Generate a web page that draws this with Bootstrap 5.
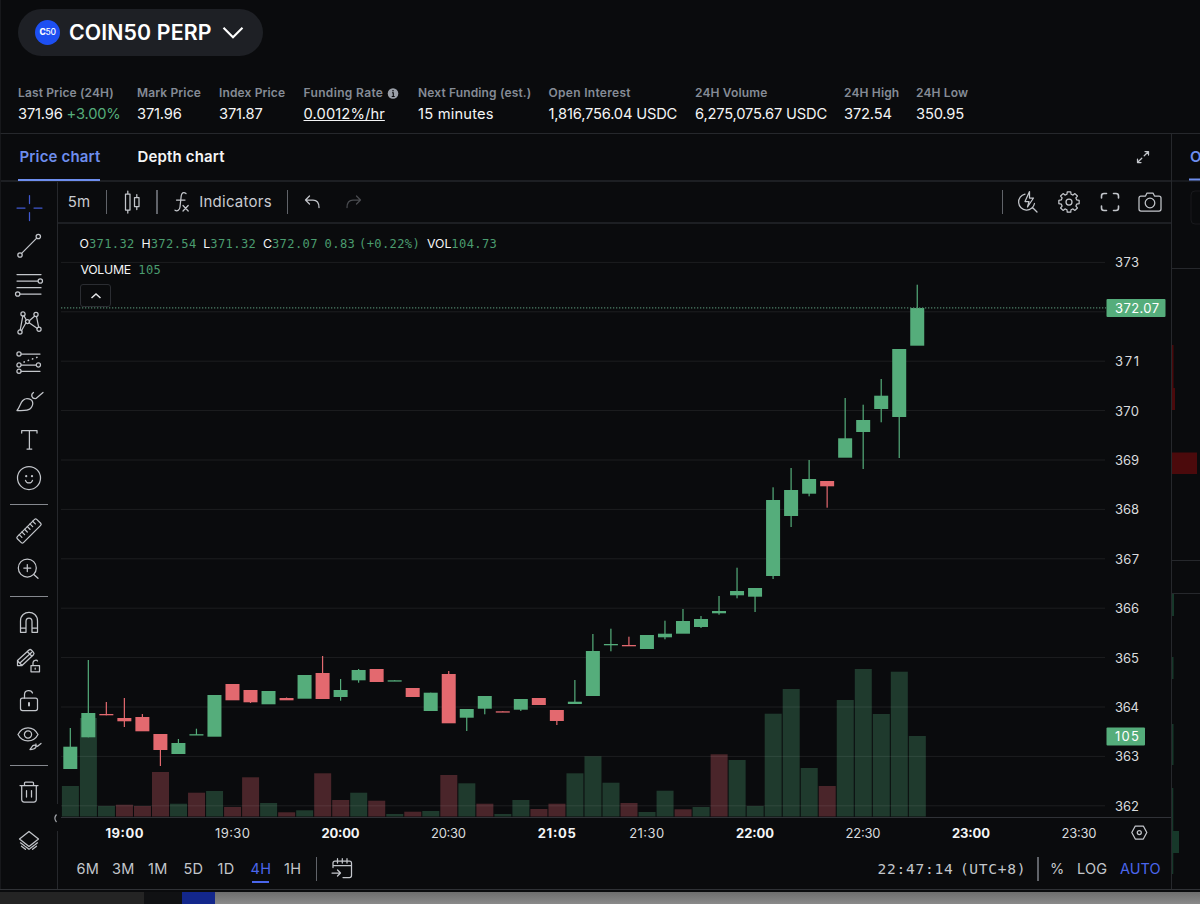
<!DOCTYPE html>
<html lang="en">
<head>
<meta charset="utf-8">
<meta name="viewport" content="width=device-width, initial-scale=1">
<title>COIN50 PERP</title>
<link href="https://cdn.jsdelivr.net/npm/bootstrap@5.3.0/dist/css/bootstrap.min.css" rel="stylesheet">
<style>
:root{--bg:#0a0b0d;--line:#26282c;--up:#55ad7b;--down:#e3696f;--accent:#6e8eee;--ico:#c3c6cb}
body{background:var(--bg);color:#f4f5f6;font-family:Inter,"Liberation Sans",sans-serif;width:1200px;height:904px;overflow:hidden;line-height:1.2}
svg{display:block;flex:none}
.ico{fill:none;stroke:var(--ico);stroke-width:1.25;stroke-linecap:round;stroke-linejoin:round}
.head{height:134px;border-bottom:1px solid var(--line);border-left:1px solid #17181b;padding:9px 0 0 17px}
.market{width:245px;height:47px;background:#1e2025;padding-left:17px;color:#fff}
.coin{width:25px;height:25px;background:#1d4ff2;font-size:8.5px;letter-spacing:-.3px;font-weight:500}
.coin b{font-weight:800}
.market-name{font-size:21.3px;font-weight:600;margin-left:9px;width:143px;letter-spacing:.12px;white-space:nowrap}
.stats{display:grid;grid-template-columns:119px 82px 84.5px 114.5px 130.5px 146.5px 149px 72px 60px;margin-top:30px;white-space:nowrap}
.stat-k{font-size:12px;font-weight:600;color:#858b96;height:15px;letter-spacing:.14px}
.stat-v{font-size:14.7px;height:18px;margin-top:5px;letter-spacing:-.18px}
.up{color:var(--up)}
.main{height:755px}
.panel{width:1172px;border-right:1px solid var(--line);border-left:1px solid #17181b}
.tabs{height:48px;border-bottom:2px solid #1d1f23;padding-left:17px;font-size:15px;font-weight:600;letter-spacing:.16px;white-space:nowrap}
.tab{height:47px;padding:14px 0 0 1.5px}
.tab.on{color:var(--accent);border-bottom:2px solid var(--accent);width:82px}
.tab.off{margin-left:36px}
.rail{width:57px;border-right:1px solid var(--line);padding-top:6.75px;position:relative}
.rail svg{height:38.5px;width:40px;margin-left:8px}
.rail hr{width:38px;margin:7px 0 7px 9px;border:0;height:1px;background:#85888e;opacity:1}
.fold{position:absolute;left:48px;top:622px;width:12px;height:27px;background:var(--bg)}
.work{width:1113px}
.bar{height:42px;border-bottom:2px solid #1d1f23;color:#c9ccd1;font-size:15px}
.sep{width:1.5px;height:24px;background:#606369}
.plot{height:629px;position:relative}
.plot text{fill:#d9dbde;font-size:13px;font-family:Inter,sans-serif}
.plot text.hour{font-weight:700;fill:#f4f5f6}
.legend{position:absolute;left:21.5px;top:12.5px;font-size:12.3px;white-space:nowrap}
.mono{font-family:"DejaVu Sans Mono","Liberation Mono",monospace;color:#4a9c6f}
.legend .mono{font-size:12.1px;letter-spacing:.36px}
.collapse-btn{width:31px;height:23px;border:1.5px solid #2b2d32;border-radius:3px;background:var(--bg)}
.foot{height:32px;font-size:14.5px;color:#c3c6cb;letter-spacing:.4px}
.range{width:33px;height:18px;white-space:nowrap}
.cur{color:#4a66ec}
.cur:after{content:"";display:block;height:2px;width:17px;background:#4a66ec;margin:4px 0 0 2px}
.clock{font-family:"DejaVu Sans Mono",monospace;font-size:14.6px;letter-spacing:.7px;word-spacing:-3px;width:159.5px;white-space:nowrap}
.side{width:28px;overflow:hidden}
.under{height:15px;border-top:1px solid #303236;padding-top:2px}
.under div{height:12px}
</style>
</head>
<body>
<header class="head">
  <div class="market rounded-pill d-flex align-items-center">
    <span class="coin rounded-circle d-flex align-items-center justify-content-center"><b>C</b>50</span>
    <span class="market-name">COIN50 PERP</span>
    <svg class="ms-2" width="26" height="24" viewBox="0 0 26 24" fill="none" stroke="#fff" stroke-width="2.1"><path d="M3.5 6.8 13 16.3 22.5 6.8"/></svg>
  </div>
  <div class="stats">
    <div><div class="stat-k">Last Price (24H)</div><div class="stat-v">371.96 <span class="up">+3.00%</span></div></div>
    <div><div class="stat-k">Mark Price</div><div class="stat-v">371.96</div></div>
    <div><div class="stat-k">Index Price</div><div class="stat-v">371.87</div></div>
    <div><div class="stat-k d-flex align-items-center" style="letter-spacing:.34px">Funding Rate <svg class="ms-1" width="12" height="12" viewBox="0 0 12 12"><circle cx="6" cy="5.5" r="5.3" fill="#9a9fa8"/><path d="M5 4.700h1.300V8.500M4.700 8.500h3" stroke="#0a0b0d" stroke-width="1.1" fill="none"/><circle cx="6" cy="2.700" r=".8" fill="#0a0b0d"/></svg></div><div class="stat-v text-decoration-underline" style="letter-spacing:.12px">0.0012%/hr</div></div>
    <div><div class="stat-k">Next Funding (est.)</div><div class="stat-v" style="letter-spacing:.2px">15 minutes</div></div>
    <div><div class="stat-k" style="letter-spacing:.3px">Open Interest</div><div class="stat-v">1,816,756.04 USDC</div></div>
    <div><div class="stat-k">24H Volume</div><div class="stat-v">6,275,075.67 USDC</div></div>
    <div><div class="stat-k">24H High</div><div class="stat-v">372.54</div></div>
    <div><div class="stat-k">24H Low</div><div class="stat-v">350.95</div></div>
  </div>
</header>

<main class="main d-flex">
  <section class="panel d-flex flex-column">
    <div class="tabs d-flex">
      <div class="tab on">Price chart</div>
      <div class="tab off">Depth chart</div>
      <svg class="ico ms-auto" style="margin:16px 21px 0 0" width="14" height="14" viewBox="0 0 14 14"><path d="M8.2 5.8 12.3 1.7M9 1.5h3.5V5M5.8 8.2 1.7 12.3M1.5 9v3.5H5"/></svg>
    </div>
    <div class="d-flex flex-grow-1">
      <nav class="rail">
        <svg class="ico" viewBox="-20 -19 40 38.5" style="stroke:#4059d0"><path d="M-12 0h8M5 0h8M.5-12.5v8M.5 4.5v8"/></svg>
        <svg class="ico" viewBox="-20 -19 40 38.5"><circle cx="9.3" cy="-9.5" r="2.2"/><circle cx="-9" cy="9" r="2.2"/><path d="M7.7-7.9-7.4 7.4"/></svg>
        <svg class="ico" viewBox="-20 -19 40 38.5"><path d="M-12-10.5h24M-12-4H9M-12 2.7h24M-9 9h21"/><circle cx="11.3" cy="-4" r="2.2"/><circle cx="-11.3" cy="9" r="2.2"/></svg>
        <svg class="ico" viewBox="-20 -19 40 38.5"><path d="M-6.2-6.8-8.8 7M-5-7.3-2.7-3M-7.6 7.8-3-.2M0-2 5.5-6.8M7.5-6.5 9.7 4.3M.1-.2 8.4 5.4"/><circle cx="-6" cy="-9" r="2.1"/><circle cx="7" cy="-8.5" r="2.1"/><circle cx="10" cy="6.3" r="2.1"/><circle cx="-9" cy="9" r="2.1"/><circle cx="-1.5" cy="-1.4" r="2.1"/></svg>
        <svg class="ico" viewBox="-20 -19 40 38.5"><circle cx="-10" cy="-8" r="2.1"/><circle cx="-10" cy="3" r="2.1"/><circle cx="9.4" cy="3" r="2.1"/><circle cx="-10" cy="9.3" r="2.1"/><path d="M-7.8-8H11M-7.8 3H7M-7.8 9.3H11"/><path d="M-5 0 11-5.8" stroke-dasharray=".3 4.2" stroke-width="1.6"/></svg>
        <svg class="ico" viewBox="-20 -19 40 38.5"><path d="M-12 10.5C-8 6-8.5-1-2-1.5 4-1.5 5.5 4 1.5 8.5-1 11-5 10.5-12 10.5ZM4.500-7.500C1.500-5.500 2.500-1 7-1.500L14-7.500"/></svg>
        <svg class="ico" viewBox="-20 -19 40 38.5"><path d="M-7.300-6v-2.500H8V-6M.4-8.500V10M-2 10H2.800"/></svg>
        <svg class="ico" viewBox="-20 -19 40 38.5"><circle cy="1" r="11.5"/><path d="M-3.500 3.300C-2.500 6.800 2.500 6.800 3.500 3.300"/><circle cx="-2.800" cy="-.8" r=".5"/><circle cx="3" cy="-.8" r=".5"/></svg>
        <hr>
        <svg class="ico" viewBox="-20 -19 40 38.5"><g transform="rotate(-45)"><rect x="-13.700" y="-4.300" width="27.400" height="8.600" rx="1.500"/><path d="M-9.500-4.300v3.800M-5.700-4.300v3.800M-1.900-4.300v3.800M1.900-4.300v3.800M5.700-4.300v3.800M9.500-4.300v3.800"/></g></svg>
        <svg class="ico" viewBox="-20 -19 40 38.5"><circle cx="-1.700" cy="-1" r="9"/><path d="M4.800 5.500 9 9.300M-5.200-1h7M-1.700-4.500v7"/></svg>
        <hr>
        <svg class="ico" viewBox="-20 -19 40 38.5"><path d="M-8.500 9.300V-2C-8.500-13.500 8.500-13.500 8.500-2V9.300H3V-1.500C3-6-3-6-3-1.500V9.300ZM-8.500 5H-3M3 5H8.500"/></svg>
        <svg class="ico" viewBox="-20 -19 40 38.5"><path d="M-11.500 4.500V-.5L0-11Q1.200-12 2.300-11L4.500-8.500Q5.500-7.500 4.500-6.300L-7 4.500ZM-8.500 1.500 2.500-8.500M-11.300 0-7 4.500M-1.800-9.500 3-4.700M2 4.500h8.500v6.300H2ZM4 4.500V1.800C4-1.200 8-1.200 8.500 0M6.200 7v1.200"/></svg>
        <svg class="ico" viewBox="-20 -19 40 38.5"><rect x="-8.500" y="-2" width="17" height="12.500" rx="2"/><path d="M-4.500-2v-3.500c0-5 7-5 8-1.500"/><path d="M0 3v2.500" stroke-width="2"/></svg>
        <svg class="ico" viewBox="-20 -19 40 38.5"><path d="M-11-3.500C-6.500-12.500 4.500-12.500 9-3.500 4.500 5-6.500 5-11-3.500Z"/><circle cx="-1" cy="-3.500" r="3.600"/><path d="M1 11.500C3 9.500 3 7 5.500 7.200 8.500 8 7 11.500 1 11.500ZM7 6C6.500 8 8 9 9.500 7.500L12 5.500"/></svg>
        <hr>
        <svg class="ico" viewBox="-20 -19 40 38.5" style="margin-bottom:9.5px"><path d="M-9-6.500H9M-4.500-6.500V-9C-4.500-9.700-4-10-3.500-10h7C4-10 4.500-9.700 4.500-9v2.500M-7.300-6.500V7.500q0 2.500 2.500 2.500h9.600q2.500 0 2.500-2.500v-14M-2.500-1.500v6.500M2.500-1.500v6.500"/></svg>
        <svg class="ico" viewBox="-20 -19 40 38.5"><path d="M-9.500-1 0-8.500 9.500-1 0 6.500Z"/><path d="M-8.500 2.800 0 9.300 8.500 2.800M-7.500 6.200-3 9.700M7.500 6.200 3 9.700" stroke-dasharray="5 1.200"/></svg>
        <div class="fold d-flex align-items-center"><svg style="width:12px;height:14px;margin-left:0" viewBox="0 0 12 14" fill="none" stroke="#a6a9ae" stroke-width="1.2"><path d="M7.500 3.500C5.300 6 5.300 8.500 7.500 11"/></svg></div>
      </nav>
      <div class="work d-flex flex-column">
        <div class="bar d-flex align-items-center">
          <span style="width:38px;margin-left:9.700px;letter-spacing:.3px">5m</span><i class="sep"></i>
          <svg class="ico" style="margin:0 14.5px 0 16.5px" width="18" height="24" viewBox="0 0 18 24"><path d="M1.500 4h4.500v16h-4.500ZM3.800 1v3M3.800 20v3M10.500 7.500H15v9h-4.500ZM12.800 4.500v3M12.800 16.500v3"/></svg>
          <i class="sep"></i>
          <svg class="ico" style="margin:0 9px 0 16.5px" width="16" height="24" viewBox="0 0 16 24"><path d="M12 3.500C9.500 1.500 7.500 3 7.200 6L6 17C5.700 20.500 3 21.500 1 20.200M2.500 10h8.500M9 15.500 14.200 21M14.200 15.500 9 21"/></svg>
          <span style="width:87.5px;letter-spacing:.25px">Indicators</span><i class="sep"></i>
          <svg class="ico" style="margin:0 23.5px 0 16px" width="17" height="16" viewBox="0 0 17 16"><path d="M5.500 2 1.500 6 5.500 10M1.500 6H9C13 6 15 8.500 15 13.500"/></svg>
          <svg class="ico" style="stroke:#4a4c50" width="17" height="16" viewBox="0 0 17 16"><path d="M11.500 2 15.500 6 11.500 10M15.500 6H8C4 6 2 8.500 2 13.500"/></svg>
          <i class="sep ms-auto"></i>
          <svg class="ico" style="margin-left:13px" width="24" height="24" viewBox="0 0 24 24"><path d="M9 4.200A8 8 0 1 0 18.500 13.500M16.500 17.500 21 22M13.500 1.500 9 11.500h4L11.500 17l6-9h-4Z"/></svg>
          <svg class="ico" style="margin-left:17px" width="24" height="24" viewBox="-12 -12 24 24"><path id="gear"/><circle r="3"/></svg>
          <svg class="ico" style="margin-left:19px;stroke-width:1.6" width="20" height="20" viewBox="0 0 20 20"><path d="M1.500 6V4Q1.500 1.500 4 1.500h2.500M13.500 1.500H16Q18.500 1.500 18.500 4v2M18.500 14v2Q18.500 18.500 16 18.500h-2.500M6.500 18.500H4Q1.500 18.500 1.500 16v-2"/></svg>
          <svg class="ico" style="margin:0 9px 0 18px" width="24" height="22" viewBox="0 0 24 22"><path d="M3 5h4.500L9 2h6l1.500 3H21q2 0 2 2v11q0 2-2 2H3q-2 0-2-2V7q0-2 2-2Z"/><circle cx="12" cy="12" r="4.800"/></svg>
        </div>
        <div class="plot">
          <svg id="chart" width="1113" height="629" viewBox="58 224 1113 629"></svg>
          <div class="legend">
            <div class="d-flex" style="height:16px;gap:6.8px"><span>O<span class="mono">371.32</span></span><span>H<span class="mono">372.54</span></span><span>L<span class="mono">371.32</span></span><span>C<span class="mono">372.07</span></span><span class="mono">0.83</span><span class="mono" style="margin-left:-3px">(+0.22%)</span><span>VOL<span class="mono">104.73</span></span></div>
            <div style="margin:10px 0 5.5px 1px;height:16px"><span style="letter-spacing:-.3px">VOLUME</span> <span class="mono ms-1">105</span></div>
            <div class="collapse-btn d-flex align-items-center justify-content-center" style="margin-left:.5px"><svg width="12" height="10" viewBox="0 0 12 10" fill="none" stroke="#e5e6e8" stroke-width="1.5"><path d="M1.500 7 6 3 10.500 7"/></svg></div>
          </div>
        </div>
        <div class="foot d-flex align-items-center">
          <span class="range" style="width:35.5px;margin-left:18.4px">6M</span><span class="range" style="width:36px">3M</span><span class="range" style="width:35.5px">1M</span><span class="range" style="width:34px">5D</span><span class="range">1D</span><span class="range cur" style="width:33.5px">4H</span><span class="range" style="width:32px">1H</span><i class="sep"></i>
          <svg class="ico" style="margin-left:13.5px" width="22" height="22" viewBox="0 0 22 22"><path d="M2 9.500V5q0-2 2-2h14.500q2 0 2 2V17.500q0 2-2 2H12M2 7.500h18.500M6.500 .7v4.300M11.300 .7v4.300M16 .7v4.300M1 15h8M6.500 12l3 3-3 3"/></svg>
          <span class="ms-auto clock">22:47:14 (UTC+8)</span><i class="sep"></i>
          <span style="margin-left:11.5px;width:27px">%</span><span style="width:43px;letter-spacing:.2px">LOG</span><span style="width:51px;color:#4a66ec;letter-spacing:.05px">AUTO</span>
        </div>
      </div>
    </div>
  </section>
  <aside class="side"><svg width="28" height="755" viewBox="1172 134 28 755">
    <path d="M1172 181h28" stroke="#1d1f23" stroke-width="1.5"/><path d="M1189 179.500h11" stroke="#6e8eee" stroke-width="2"/>
    <text x="1190" y="161.500" font-size="15" font-weight="600" fill="#6e8eee">O</text>
    <rect x="1191" y="191" width="40" height="33" rx="4" fill="none" stroke="#18191c"/>
    <path d="M1172 268.500h28M1172 560.500h28M1172 593.500h28" stroke="#26282c"/>
    <path d="M1172 345h1.500v43h1.500v22h-3ZM1172 452.500h25v21.500h-25Z" fill="#4b0a0c"/>
    <path d="M1172 594h2v22h-2ZM1172 657h1.500v22h-1.500ZM1172 724h1.500v41h-1.500ZM1172 788h1.300v86h-1.300ZM1172 831h7v22h-7Z" fill="#17382a"/>
  </svg></aside>
</main>
<div class="under d-flex"><div style="width:144px;background:#242424"></div><div style="width:38px;background:#101113"></div><div style="width:33px;background:#13278c"></div><div class="flex-grow-1" style="background:linear-gradient(#6d6d6d,#8a8a8a)"></div></div>

<script src="https://cdn.jsdelivr.net/npm/bootstrap@5.3.0/dist/js/bootstrap.bundle.min.js"></script>
<script>
// high, body top, body bottom, low, candle colour, volume top, volume colour
const bars=`728 746.7 769 769 g 786 g|660 713 737.3 737.3 g 718 g|702 714 715.3 715.3 r 806 g|698 718 721.3 727 r 804.7 r|714 717 731.3 731 r 806 r|734 734 750 766 r 772 r|739 743 754 754 g 803.7 g|728.7 734.2 735.5 735 g 792.7 r|695 695 736.7 736 g 791 g|684 684 700.3 700 r 807 r|690 690 702.3 703 r 777.3 r|691 691 704.3 704 g 803 g|697.500 698 700.3 700 r 812.3 r|675 675 698.7 698 g 810.3 g|656 673 699 699 r 773.3 r|679 690 697 700.7 g 800 r|669 670 680.3 682.7 g 792.7 g|669 669 682 682 r 800.7 r|680.300 680.300 681.600 681 g 814 g|688 688 697 697 r 811.7 r|692.700 692.700 711 711 g 811 g|671 674 723.300 723 r 775 r|709 709 717.700 731 g 783.3 g|696 696 708.7 714.3 g 803.7 r|711.300 711.300 712.600 712 r 814 g|699 699 709.700 711 g 800 g|698 698 705 705 r 809 r|710 710 721 725 r 803.7 r|680 701.7 704 704 g 773.3 g|634 651 696 696 g 756.3 g|628.7 644 645.300 651.3 g 782.7 g|636.7 645 646.300 646 r 803 r|635 635 649 649 g 812 g|620.7 633.7 637.3 639.3 g 790.7 g|609 621 633.7 633 g 809.3 r|616 619 627 628 g 807 g|596 611 613.300 614.7 g 754.3 r|567.7 591 595.300 598.3 g 760 g|588 588 596.7 612 g 806 g|487.3 500 576 579 g 713.7 g|468 490 516 527 g 689 g|460 479 493.7 496.3 g 768 g|481 481 486.3 507.7 r 786 r|398 438.3 457.7 457 g 700 g|404.7 420 432 469 g 669 g|379 395.7 409 422.3 g 714 g|349 349 417 458 g 671.7 g|284.7 308 345.7 345 g 736 g`.split('|').map(s=>s.split(' '));
const up='#55ad7b',down='#e3696f';let s='';
bars.forEach((b,i)=>{const x=70.3+i*18.02;s+=`<rect x="${x-8.4}" y="${b[5]}" width="17" height="${816.5-b[5]}" fill="${b[6]=='g'?'#1f3a2d':'#4a252a'}"/>`});
for(let i=0;i<12;i++){const y=262.4+i*49.4;s+=`<path d="M61 ${y}H1105" stroke="#fff" stroke-opacity=".08"/>`;if(i!=1)s+=`<text x="1115" y="${y+4.9}" textLength="24">${373-i}</text>`}
bars.forEach((b,i)=>{const x=70.3+i*18.02,c=b[4]=='g'?up:down;s+=`<rect x="${x-.6}" y="${b[0]}" width="1.2" height="${b[3]-b[0]}" fill="${c}"/><rect x="${x-7}" y="${b[1]}" width="14" height="${b[2]-b[1]}" fill="${c}"/>`});
s+='<path d="M61 307.800H1106" stroke="#4d8067" stroke-width="1.2" stroke-dasharray="1.3 1.7"/><path d="M61 817.500H1171" stroke="#303237"/>';
s+='<rect x="1106.5" y="299" width="59" height="18" rx="1" fill="#55ad7b"/><text x="1115" y="313" textLength="44" style="fill:#fff">372.07</text><rect x="1106.5" y="727.5" width="38.5" height="18" rx="1" fill="#55ad7b"/><text x="1115" y="741.300" textLength="24" style="fill:#fff">105</text>';
[['19:00',124.5],['19:30',232.5],['20:00',340.5],['20:30',448.5],['21:05',556.7],['21:30',646.7],['22:00',755],['22:30',863],['23:00',971],['23:30',1079]].forEach(([t,x],i)=>{const h=[0,2,4,6,8].includes(i),w=h?38:35;s+=`<text class="${h?'hour':''}" x="${x-w/2}" y="837.8" textLength="${w}">${t}</text>`});
s+='<g class="ico"><path d="M1131.500 832.500 1135 826h8l3.500 6.500-3.500 6.500h-8Z" transform="translate(.3 0)"/><circle cx="1139.300" cy="832.500" r="2"/></g>';
document.getElementById('chart').innerHTML=s;
// eight-tooth cog outline
let g='';for(let k=0;k<8;k++){[[-.26,8],[-.17,10.3],[.17,10.3],[.26,8]].forEach(([a,r])=>{const t=k*Math.PI/4+a;g+=(g?'L':'M')+(r*Math.cos(t)).toFixed(2)+' '+(r*Math.sin(t)).toFixed(2)})}
document.getElementById('gear').setAttribute('d',g+'Z');
</script>
</body>
</html>
